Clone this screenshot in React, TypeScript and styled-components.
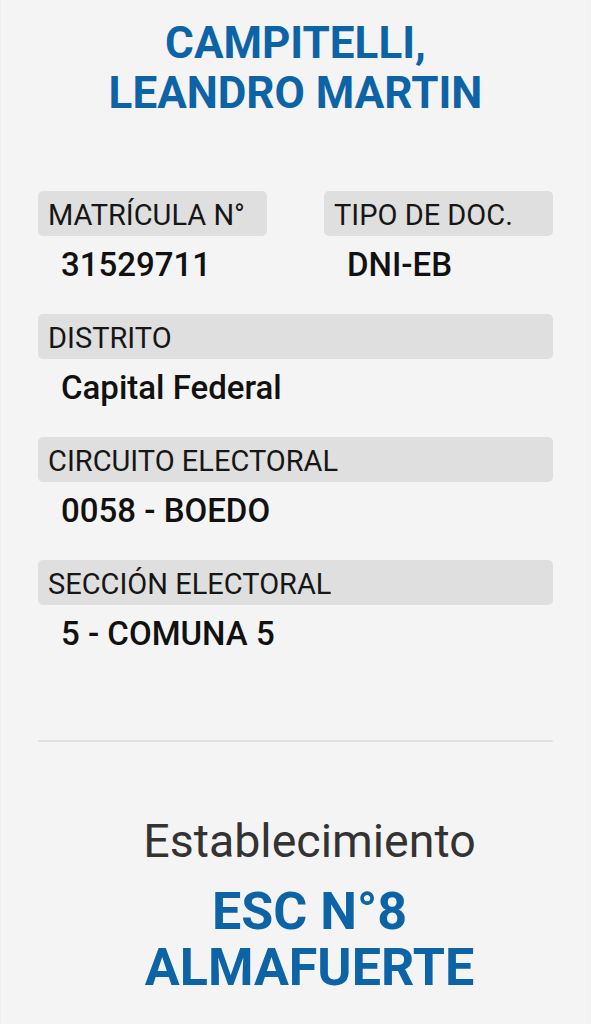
import React from "react";
import styled, { createGlobalStyle } from "styled-components";

const GlobalStyle = createGlobalStyle`
  html, body {
    margin: 0;
    padding: 0;
    background: #f4f4f4;
  }
  body {
    font-family: Roboto, "Liberation Sans", Arial, sans-serif;
  }
`;

const Page = styled.div`
  width: 591px;
  min-height: 1024px;
  box-sizing: border-box;
  background: #f4f4f4;
  padding: 18px 37px 0;
  border-left: 1px solid #efefef;
  border-right: 1px solid #efefef;
`;

const Name = styled.h1`
  margin: 0;
  font-family: Roboto, "Liberation Sans", sans-serif;
  font-weight: 700;
  font-size: 44px;
  line-height: 50px;
  color: #0c63a6;
  text-align: center;
`;

const Fields = styled.div`
  margin-top: 73px;
  display: flex;
  flex-direction: column;
  gap: 30px;
`;

const Row = styled.div<{ $cols: number }>`
  display: grid;
  grid-template-columns: repeat(${(p) => p.$cols}, 1fr);
  column-gap: 57px;
`;

const Field = styled.div`
  display: flex;
  flex-direction: column;
`;

const Label = styled.div`
  height: 45px;
  box-sizing: border-box;
  display: flex;
  align-items: center;
  padding: 2px 10px 0;
  background: #dfdfdf;
  border-radius: 5px;
  font-size: 29px;
  font-weight: 400;
  color: #161616;
  white-space: nowrap;
`;

const Value = styled.div`
  margin-top: 10px;
  padding-left: 23px;
  font-size: 33px;
  line-height: 38px;
  font-weight: 500;
  color: #111;
`;

const Divider = styled.hr`
  margin: 87px 0 0;
  border: none;
  height: 2px;
  background: #e2e2e2;
`;

const Venue = styled.div`
  margin-top: 72px;
  padding-left: 28px;
  display: flex;
  flex-direction: column;
  align-items: center;
  gap: 16px;
`;

const VenueLabel = styled.div`
  font-size: 46.5px;
  line-height: 54px;
  font-weight: 400;
  color: #333;
`;

const VenueName = styled.div`
  font-size: 52px;
  line-height: 56px;
  font-weight: 700;
  color: #0c63a6;
  text-align: center;
`;

const FieldBlock = ({ label, value }: { label: string; value: string }) => (
  <Field>
    <Label>{label}</Label>
    <Value>{value}</Value>
  </Field>
);

export default function App() {
  return (
    <>
      <GlobalStyle />
      <Page>
        <Name>
          CAMPITELLI,
          <br />
          LEANDRO MARTIN
        </Name>
        <Fields>
          <Row $cols={2}>
            <FieldBlock label="MATRÍCULA N°" value="31529711" />
            <FieldBlock label="TIPO DE DOC." value="DNI-EB" />
          </Row>
          <Row $cols={1}>
            <FieldBlock label="DISTRITO" value="Capital Federal" />
          </Row>
          <Row $cols={1}>
            <FieldBlock label="CIRCUITO ELECTORAL" value="0058 - BOEDO" />
          </Row>
          <Row $cols={1}>
            <FieldBlock label="SECCIÓN ELECTORAL" value="5 - COMUNA 5" />
          </Row>
        </Fields>
        <Divider />
        <Venue>
          <VenueLabel>Establecimiento</VenueLabel>
          <VenueName>
            ESC N°8
            <br />
            ALMAFUERTE
          </VenueName>
        </Venue>
      </Page>
    </>
  );
}
